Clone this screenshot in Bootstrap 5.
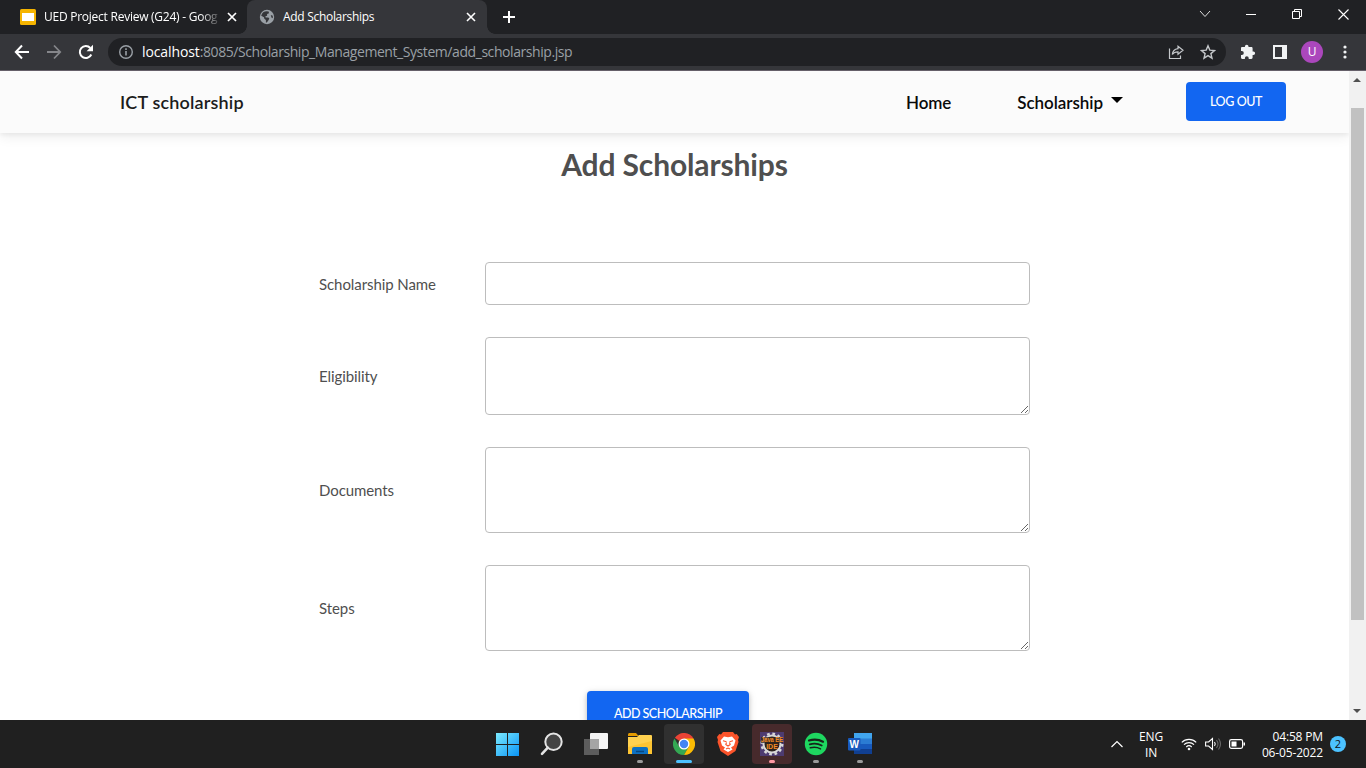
<!DOCTYPE html>
<html lang="en">
<head>
<meta charset="utf-8">
<title>Add Scholarships</title>
<meta name="viewport" content="width=device-width, initial-scale=1">
<link href="https://cdn.jsdelivr.net/npm/bootstrap@5.3.0/dist/css/bootstrap.min.css" rel="stylesheet">
<style>
  body { height: 768px; font-family: "Open Sans", "Noto Sans", sans-serif; background: #fff; }
  svg { display: block; flex: none; }
  .t { white-space: nowrap; }
  /* browser chrome */
  .tabstrip { height: 34px; background: #202124; color: #fff; font-size: 12px; line-height: 34px; }
  .tab-idle { width: 247px; padding-left: 20px; }
  .tab-idle .t { width: 174px; margin-left: 8px; letter-spacing: -.25px; -webkit-mask-image: linear-gradient(90deg, #000 90%, rgba(0,0,0,.2)); mask-image: linear-gradient(90deg, #000 90%, rgba(0,0,0,.2)); }
  .tab-active { width: 240px; background: #35363a; border-radius: 8px 8px 0 0; padding-left: 12px; position: relative; }
  .tab-active::before, .tab-active::after { content: ""; position: absolute; bottom: 0; width: 8px; height: 8px; }
  .tab-active::before { left: -8px; background: radial-gradient(circle at 0 0, transparent 7.5px, #35363a 8px); }
  .tab-active::after { right: -8px; background: radial-gradient(circle at 100% 0, transparent 7.5px, #35363a 8px); }
  .tab-active .t { margin-left: 8px; width: 182px; letter-spacing: -.3px; }
  .toolbar { height: 37px; background: #35363a; border-bottom: 1px solid #655f69; padding-left: 14px; }
  .omnibox { width: 1118px; height: 28px; border-radius: 14px; background: #202124; color: #9aa0a6; font-size: 14px; padding-left: 10px; }
  .omnibox .url { letter-spacing: -.43px; margin: 0 0 1px 8px; }
  .omnibox b { font-weight: 400; color: #fff; letter-spacing: -.1px; }
  .avatar { width: 22px; height: 22px; background: #ab47bc; color: #fff; font-size: 12px; line-height: 22px; }
  /* page */
  .viewport { height: 649px; }
  .page { font-family: Lato, sans-serif; color: #4f4f4f; }
  .site-nav { height: 62px; background: #fbfbfb; box-shadow: 0 4px 12px rgba(0,0,0,.07), 0 2px 4px rgba(0,0,0,.05); padding: 0 63px 0 120px; }
  .site-nav .brand { font-size: 18px; font-weight: 600; color: #1c1c1c; letter-spacing: .17px; }
  .site-nav .lnk { font-size: 17px; font-weight: 600; color: #0a0a0a; letter-spacing: -.06px; padding-top: 1px; }
  .caret { border: 6px solid transparent; border-top-color: #000; border-bottom: 0; margin-left: 8px; margin-top: -5px; }
  .btn-blue { background: #1266f1; color: #fff; font-size: 12.5px; font-weight: 500; border: 0; border-radius: 4px; }
  .logout { width: 100px; height: 39px; letter-spacing: -.4px; padding-top: 8px; margin: 0 0 1px 63px; }
  h1.title { font-size: 30px; font-weight: 700; line-height: 36px; margin: 13px 0 80px; letter-spacing: -.13px; }
  .frm { width: 711px; margin-left: 319px; gap: 32px; }
  .frm label { width: 166px; font-size: 15px; color: #4f4f4f; letter-spacing: -.08px; padding-top: 1px; }
  .frm .form-control { width: 545px; border: 1px solid #bdbdbd; border-radius: 4px; padding: 0; resize: vertical; min-height: 0; }
  .submit { width: 162px; height: 46px; margin: 8px 0 0 268px; box-shadow: 0 2px 5px rgba(0,0,0,.2), 0 2px 10px rgba(0,0,0,.1); letter-spacing: -.5px; }
  .sbar { width: 17px; background: #f1f1f1; }
  .thumb { width: 13px; height: 512px; background: #c1c1c1; margin-top: 22px; }
  /* taskbar */
  .taskbar { height: 48px; background: #202020; color: #fff; font-size: 12px; line-height: 16px; padding-left: 488px; }
  .app { width: 40px; height: 40px; border-radius: 4px; position: relative; }
  .app.on { background: #303030; } .app.alert-on { background: #472a2c; }
  .app i { position: absolute; bottom: 1px; width: 6px; height: 3px; border-radius: 2px; background: #9a9a9a; }
  .app.on i { width: 16px; background: #4cc2ff; } .app.alert-on i { background: #ff99a4; }
  .lang { width: 28px; margin-left: 14px; letter-spacing: -.2px; padding-top: 1px; }
  .clock { width: 64px; margin-left: 13px; letter-spacing: -.15px; padding-top: 1px; }
  .count { width: 16px; height: 16px; background: #4cc2ff; color: #111; font-size: 11px; }
</style>
</head>
<body class="overflow-hidden">
<header>
  <div class="tabstrip d-flex">
    <div class="tab-idle d-flex align-items-center">
      <svg width="16" height="16"><rect width="16" height="16" rx="1.5" fill="#f5b400"/><rect x="2" y="4" width="12" height="8" fill="#fff"/></svg>
      <span class="t">UED Project Review (G24) - Goog</span>
      <svg class="ms-2" width="12" height="12" stroke="#fff" stroke-width="1.7"><path d="M2 2l8 8M10 2l-8 8"/></svg>
    </div>
    <div class="tab-active d-flex align-items-center">
      <svg width="16" height="16"><circle cx="8" cy="8" r="7.2" fill="#9aa0a6"/><path fill="#35363a" d="M8 2.3l2 .5-.3 1.6-1.6.6v1.7l-1.7.5.3 1.2h2.6l1 1.1-1 2.1-1.5 2-.9-.2V11l-1.6-1.2-.3-1.5L2.2 6.7A6 6 0 0 1 8 2.3zM11.8 6l2 .8v2.4l-1.4-.7z"/></svg>
      <span class="t">Add Scholarships</span>
      <svg width="12" height="12" stroke="#fff" stroke-width="1.6"><path d="M2 2l8 8M10 2l-8 8"/></svg>
    </div>
    <svg class="align-self-center" style="margin-left:15px" width="14" height="14" stroke="#fff" stroke-width="2"><path d="M7 1v12M1 7h12"/></svg>
    <div class="ms-auto d-flex align-items-center" style="margin-right:17px;height:28px">
      <svg width="12" height="12" fill="none" stroke="#ddd"><path d="M1 3l5 5.5L11 3"/></svg>
      <svg style="margin-left:35px" width="10" height="10" stroke="#fff"><path d="M0 5.5h10"/></svg>
      <svg style="margin-left:36px" width="10" height="10" fill="none" stroke="#fff"><path d="M.5 2.5h7v7h-7zM2.5 2.5v-2h7v7h-2"/></svg>
      <svg style="margin-left:36px" width="11" height="11" stroke="#fff" stroke-width="1.1"><path d="M.5.5l10 10M10.500.5l-10 10"/></svg>
    </div>
  </div>
  <div class="toolbar d-flex align-items-center">
    <svg width="16" height="16" fill="none" stroke="#fff" stroke-width="2"><path d="M15 8H2M8 1.500L1.800 8 8 14.500"/></svg>
    <svg style="margin-left:16px" width="16" height="16" fill="none" stroke="#85868a" stroke-width="1.800"><path d="M1 8h13M8 1.500L14.200 8 8 14.500"/></svg>
    <svg style="margin-left:16px" width="16" height="16"><path d="M13.300 10.500A6 6 0 1 1 12.300 4" fill="none" stroke="#fff" stroke-width="2"/><path d="M15 .8v6.400H8.600z" fill="#fff"/></svg>
    <div class="omnibox d-flex align-items-center" style="margin-left:14px">
      <svg width="16" height="16" fill="none" stroke="#9aa0a6" stroke-width="1.400"><circle cx="8" cy="8" r="6.300"/><path d="M8 7v4.500M8 4.300v1.600" stroke-width="1.600"/></svg>
      <span class="t url"><b>localhost</b>:8085/Scholarship_Management_System/add_scholarship.jsp</span>
      <svg class="ms-auto" width="16" height="16" fill="none" stroke="#c4c7ca" stroke-width="1.200"><path d="M1.500 4.500v10h11v-3M10 2.200l5 4-5 4V7.800c-3 0-4.500.8-5.700 2.700.3-3.500 2.500-5.500 5.700-5.900z"/></svg>
      <svg style="margin:0 10px 0 16px" width="16" height="16" fill="none" stroke="#c4c7ca" stroke-width="1.400"><path d="M8 1.800l1.800 4.300 4.700.4-3.600 3.100 1.100 4.600L8 11.700l-4 2.500 1.100-4.600-3.600-3.100 4.700-.4z"/></svg>
    </div>
    <svg style="margin-left:14px" width="16" height="16" fill="#f1f3f4"><path d="M13.400 7.500H12.600V4.400c0-.8-.6-1.300-1.300-1.300H8.500V2.500a1.800 1.800 0 0 0-3.600 0v.6H2.200C1.500 3.100 1 3.600 1 4.300v2.600h.8a2 2 0 0 1 0 4H1v2.700c0 .8.500 1.300 1.200 1.300h2.700v-.8a1.900 1.900 0 0 1 3.800 0v.8h2.600c.8 0 1.300-.5 1.300-1.300v-2.700h.8a1.700 1.700 0 0 0 0-3.400z"/></svg>
    <svg style="margin-left:17px" width="14" height="14"><path fill="#f1f3f4" fill-rule="evenodd" d="M0 0h14v14H0zM2 2v10h7V2z"/></svg>
    <div class="avatar rounded-circle text-center" style="margin-left:14px">U</div>
    <svg style="margin-left:20px" width="4" height="16" fill="#f1f3f4"><circle cx="2" cy="3" r="1.600"/><circle cx="2" cy="8" r="1.600"/><circle cx="2" cy="13" r="1.600"/></svg>
  </div>
</header>

<div class="viewport d-flex overflow-hidden">
  <main class="page flex-grow-1 overflow-hidden">
    <nav class="site-nav d-flex align-items-center">
      <span class="brand t">ICT scholarship</span>
      <span class="lnk t ms-auto">Home</span>
      <span class="lnk t d-flex align-items-center" style="margin-left:66px"><span>Scholarship</span><span class="caret"></span></span>
      <button class="btn btn-blue logout t">LOG OUT</button>
    </nav>
    <h1 class="title text-center">Add Scholarships</h1>
    <form class="frm d-flex flex-column">
      <div class="d-flex align-items-center"><label>Scholarship Name</label><input class="form-control" style="height:43px"></div>
      <div class="d-flex align-items-center"><label>Eligibility</label><textarea class="form-control" style="height:78px"></textarea></div>
      <div class="d-flex align-items-center"><label>Documents</label><textarea class="form-control" style="height:86px"></textarea></div>
      <div class="d-flex align-items-center"><label>Steps</label><textarea class="form-control" style="height:86px"></textarea></div>
      <button type="button" class="btn btn-blue submit t">ADD SCHOLARSHIP</button>
    </form>
  </main>
  <div class="sbar d-flex flex-column align-items-center">
    <svg style="margin-top:6px" width="9" height="9" fill="#505050"><path d="M0 5l4-4 4 4z"/></svg>
    <div class="thumb"></div>
    <svg class="mt-auto" style="margin-bottom:3px" width="9" height="9" fill="#505050"><path d="M0 1l4 4 4-4z"/></svg>
  </div>
</div>

<footer class="taskbar d-flex align-items-center">
  <div class="d-flex gap-1">
    <div class="app d-flex align-items-center justify-content-center">
      <svg width="24" height="24"><defs><linearGradient id="wn" x2="1" y2="1"><stop stop-color="#7beaff"/><stop offset="1" stop-color="#0a94f5"/></linearGradient></defs><path fill="url(#wn)" d="M0 1h11v11H0zM12 1h11v11H12zM0 13h11v11H0zM12 13h11v11H12z"/></svg>
    </div>
    <div class="app d-flex align-items-center justify-content-center">
      <svg width="24" height="24" fill="none" stroke="#e4e4e4"><circle cx="13.500" cy="9.800" r="8.200" fill="#444" stroke-width="2"/><path d="M7.800 15.700L2 21.800" stroke-width="2.600" stroke-linecap="round"/></svg>
    </div>
    <div class="app d-flex align-items-center justify-content-center">
      <svg width="24" height="24"><rect x="6" y="1" width="18" height="16" rx="1" fill="#f5f5f5"/><path fill="#5d5d5d" d="M0 7h6v10h9v6H0z"/><rect x="6" y="7" width="9" height="10" fill="#a5a5a5"/></svg>
    </div>
    <div class="app d-flex align-items-center justify-content-center">
      <svg width="24" height="24"><path fill="#e59b00" d="M0 2.500C0 1.700.7 1 1.500 1H8l2.500 3H0z"/><path fill="#ffd14f" d="M0 5h9l2-2h12q1 0 1 1v18H0z"/><path fill="#fbb91b" d="M0 15L24 9v13H0z" opacity=".55"/><path fill="#0c70c2" d="M4 22v-5q0-2 2-2h12q2 0 2 2v5z"/><path d="M8 19.500h8" stroke="#07467e" stroke-width="1.500"/></svg><i></i>
    </div>
    <div class="app on d-flex align-items-center justify-content-center">
      <svg width="22" height="22" viewBox="0 0 24 24"><path fill="#ea4335" d="M12 12L2.040 5.250A12 12 0 0 1 22.400 6z"/><path fill="#34a853" d="M1.600 6A12 12 0 0 0 12 24l5.200-9L12 12 6.800 15z"/><path fill="#fbbc04" d="M22.400 6H12l5.200 9L12 24A12 12 0 0 0 22.400 6z"/><circle cx="12" cy="12" r="6" fill="#fff"/><circle cx="12" cy="12" r="4.600" fill="#4285f4"/></svg><i></i>
    </div>
    <div class="app d-flex align-items-center justify-content-center">
      <svg width="22" height="24" viewBox="0 0 22 24"><path fill="#fb542b" d="M6 0h10l2 2.500 1.700-.5L22 5l-1 3 .5 2-3 9L11 24l-7.500-5-3-9L1 8 0 5l2.300-3 1.700.5z"/><path fill="#fff" d="M7 4.500l4 .7 4-.7 3.500 4-1.500 5-3 2 1.500 2L11 20l-4.500-2.500 1.500-2-3-2-1.500-5z"/><path d="M6 8.800l3.500 1M16 8.800l-3.500 1M9.500 10.500l-.7 2L11 14l2.200-1.500-.7-2M9 17l2-1 2 1" fill="none" stroke="#fb542b" stroke-width="1.100"/></svg><i class="d-none"></i>
    </div>
    <div class="app alert-on d-flex align-items-center justify-content-center">
      <svg width="24" height="24" overflow="visible" font-family="Liberation Sans" font-weight="700" font-size="7" text-anchor="middle"><rect width="24" height="24" fill="#4d3b70"/><circle cx="12" cy="12" r="8.500" fill="#2a211d" stroke="#d8d8d8" stroke-width="2"/><circle cx="12" cy="12" r="10.300" fill="none" stroke="#d8d8d8" stroke-width="2.400" stroke-dasharray="2.700 2.700"/><path fill="#31251f" d="M1 5h22v6H1zM6 11h12v6H6z" opacity=".75"/><text x="12" y="10" textLength="22" lengthAdjust="spacingAndGlyphs" fill="#f58b24">Java EE</text><text x="12" y="16.500" fill="#f58b24">IDE</text></svg><i></i>
    </div>
    <div class="app d-flex align-items-center justify-content-center">
      <svg width="24" height="24" fill="none" stroke="#16251a" stroke-linecap="round"><circle cx="12" cy="12" r="11.200" fill="#1ed760" stroke="none"/><path d="M5 8.500c5-1.500 10-1 14 1.200" stroke-width="2.200"/><path d="M5.700 12.300c4.300-1.200 8.500-.8 12 1.200" stroke-width="1.800"/><path d="M6.300 15.800c3.800-.9 7.200-.6 10.200 1.100" stroke-width="1.500"/></svg><i></i>
    </div>
    <div class="app d-flex align-items-center justify-content-center">
      <svg width="24" height="24"><path fill="#41a5ee" d="M6 1h18v6H6z"/><path fill="#2b7cd3" d="M6 6.500h18V12H6z"/><path fill="#185abd" d="M6 12h18v5.500H6z"/><path fill="#103f91" d="M6 17h18v5H6z"/><rect y="6" width="12.500" height="12.500" rx="1" fill="#185abd"/><text x="6.200" y="16" fill="#fff" font-family="Liberation Sans" font-weight="700" font-size="10" text-anchor="middle">W</text></svg><i></i>
    </div>
  </div>
  <div class="ms-auto d-flex align-items-center" style="margin-right:20px">
    <svg width="12" height="8" fill="none" stroke="#fff" stroke-width="1.200"><path d="M.5 7L6 1.500 11.500 7"/></svg>
    <div class="text-center t lang">ENG<br>IN</div>
    <svg style="margin-left:16px" width="16" height="14" fill="none" stroke="#fff" stroke-width="1.200"><path d="M.8 5.300a10.200 10.200 0 0 1 14.400 0M3 7.700a7 7 0 0 1 10 0M5.300 10a3.900 3.900 0 0 1 5.400 0"/><circle cx="8" cy="12" r="1.300" fill="#fff" stroke="none"/></svg>
    <svg style="margin-left:8px" width="16" height="14" fill="none" stroke="#fff" stroke-width="1.100"><path d="M.6 5h3L7.500 1.500v11L3.600 9h-3zM9.500 5q1.500 2 0 4"/><path d="M11.500 3.200q3 3.800 0 7.600M13.500 1.500q4 5.500 0 11" stroke="#666"/></svg>
    <svg style="margin-left:8px" width="17" height="12"><rect x=".6" y="1.600" width="13" height="8.800" rx="1.800" fill="none" stroke="#fff" stroke-width="1.200"/><path fill="#fff" d="M2.500 3.500h5v5h-5zM14.500 4.500h1.500v3h-1.500z"/></svg>
    <div class="text-end t clock">04:58 PM<br>06-05-2022</div>
    <div class="count rounded-circle text-center" style="margin-left:7px">2</div>
  </div>
</footer>
<script src="https://cdn.jsdelivr.net/npm/bootstrap@5.3.0/dist/js/bootstrap.bundle.min.js"></script>
</body>
</html>
